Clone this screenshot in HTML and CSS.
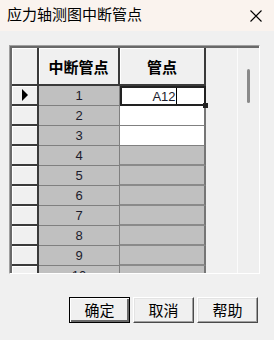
FILE: index.html
```html
<!DOCTYPE html>
<html lang="zh">
<head>
    <meta charset="UTF-8">
    <title>应力轴测图中断管点</title>
    <link rel="stylesheet" href="styles.css">
</head>
<body>
    <div class="titlebar">
        <span class="title">应力轴测图中断管点</span>
        <svg class="close" width="12" height="12" viewBox="0 0 12 12">
            <path d="M0.5 0.5 L11.5 11.5 M11.5 0.5 L0.5 11.5" stroke="#000" stroke-width="1.1" fill="none"/>
        </svg>
    </div>

    <div class="content">
        <!-- Griglia dati -->
        <div class="grid-frame">
            <div class="grid-inner">
                <div class="cells">
                    <div class="row head">
                        <div class="rh"></div>
                        <div class="ch c1">中断管点</div>
                        <div class="ch c2">管点</div>
                    </div>
                    <div class="row">
                        <div class="rh"><span class="arrow"></span></div>
                        <div class="cell c1">1</div>
                        <div class="cell c2 white current"><span>A12</span><span class="caret"></span><span class="handle"></span></div>
                    </div>
                    <div class="row">
                        <div class="rh"></div>
                        <div class="cell c1">2</div>
                        <div class="cell c2 white"></div>
                    </div>
                    <div class="row">
                        <div class="rh"></div>
                        <div class="cell c1">3</div>
                        <div class="cell c2 white"></div>
                    </div>
                    <div class="row">
                        <div class="rh"></div>
                        <div class="cell c1">4</div>
                        <div class="cell c2"></div>
                    </div>
                    <div class="row">
                        <div class="rh"></div>
                        <div class="cell c1">5</div>
                        <div class="cell c2"></div>
                    </div>
                    <div class="row">
                        <div class="rh"></div>
                        <div class="cell c1">6</div>
                        <div class="cell c2"></div>
                    </div>
                    <div class="row">
                        <div class="rh"></div>
                        <div class="cell c1">7</div>
                        <div class="cell c2"></div>
                    </div>
                    <div class="row">
                        <div class="rh"></div>
                        <div class="cell c1">8</div>
                        <div class="cell c2"></div>
                    </div>
                    <div class="row">
                        <div class="rh"></div>
                        <div class="cell c1">9</div>
                        <div class="cell c2"></div>
                    </div>
                    <div class="row">
                        <div class="rh"></div>
                        <div class="cell c1">10</div>
                        <div class="cell c2"></div>
                    </div>
                </div>
                <div class="blank"></div>
                <div class="vscroll"><div class="thumb"></div></div>
            </div>
        </div>

        <div class="buttons">
            <button class="btn default">确定</button>
            <button class="btn">取消</button>
            <button class="btn">帮助</button>
        </div>
    </div>
</body>
</html>
```

FILE: styles.css
```css
* {
    margin: 0;
    padding: 0;
    box-sizing: border-box;
}
body {
    width: 274px;
    height: 340px;
    overflow: hidden;
    background-color: #f0f0f0;
    font-family: "Noto Sans CJK SC", "Liberation Sans", sans-serif;
    color: #000;
}
/* Barra del titolo */
.titlebar {
    height: 31px;
    background-color: #faf3ee;
    display: flex;
    align-items: center;
    justify-content: space-between;
    padding: 0 12px 0 7px;
}
.title {
    font-size: 15px;
    line-height: 20px;
    margin-top: -4px;
}
.close {
    display: block;
}
.content {
    padding: 14px 0 0 9px;
}
/* Griglia */
.grid-frame {
    width: 251px;
    height: 229px;
    border-top: 1px solid #a0a0a0;
    border-left: 1px solid #a0a0a0;
    border-right: 1px solid #ffffff;
    border-bottom: 1px solid #ffffff;
}
.grid-inner {
    height: 100%;
    border-top: 2px solid #696969;
    border-left: 2px solid #696969;
    display: flex;
    overflow: hidden;
}
.cells {
    width: 194px;
    flex: none;
}
.row {
    display: flex;
    height: 20px;
}
.row.head {
    height: 38px;
}
.rh {
    width: 27px;
    background-color: #f0f0f0;
    border-right: 2px solid #3a3a3a;
    border-bottom: 2px solid #3a3a3a;
    box-shadow: inset 1px 1px #ffffff;
    display: flex;
    align-items: center;
    justify-content: center;
}
.arrow {
    width: 0;
    height: 0;
    border-top: 6px solid transparent;
    border-bottom: 6px solid transparent;
    border-left: 6px solid #000;
    margin-left: 1px;
}
.ch {
    background-color: #f0f0f0;
    border-right: 2px solid #3a3a3a;
    border-bottom: 2px solid #3a3a3a;
    box-shadow: inset 1px 1px #ffffff;
    font-size: 15px;
    font-weight: bold;
    display: flex;
    align-items: center;
    justify-content: center;
}
.c1 {
    width: 81px;
}
.c2 {
    width: 86px;
}
.cell {
    background-color: #c0c0c0;
    border-right: 1px solid #808080;
    border-bottom: 1px solid #808080;
    font-family: "Liberation Sans", sans-serif;
    font-size: 13px;
    color: #1c1c2c;
    display: flex;
    align-items: center;
    justify-content: center;
}
.cell.c2 {
    border-right: 2px solid #767676;
    border-bottom: 2px solid #8a8a8a;
}
.cell.white {
    background-color: #ffffff;
    border-bottom: 1px solid #808080;
}
.cell.current {
    position: relative;
    border: 2px solid #222;
    padding-left: 3px;
}
.caret {
    width: 1px;
    height: 16px;
    background-color: #000;
}
.handle {
    position: absolute;
    right: -4px;
    bottom: -4px;
    width: 5px;
    height: 5px;
    background-color: #222;
}
.blank {
    width: 31px;
    flex: none;
    background-color: #f0f0f0;
}
.vscroll {
    width: 22px;
    flex: none;
    border-left: 1px solid #fbfbfb;
    background-color: #efefef;
    padding: 21px 0 0 9px;
}
.thumb {
    width: 3px;
    height: 34px;
    border-radius: 2px;
    background-color: #8a8a8a;
}
/* Pulsanti */
.buttons {
    display: flex;
    justify-content: flex-end;
    gap: 3px;
    padding-right: 16px;
    margin-top: 23px;
}
.btn {
    width: 61px;
    height: 26px;
    background-color: #f0f0f0;
    font-family: "Noto Sans CJK SC", sans-serif;
    font-size: 15px;
    color: #000;
    border: 1px solid;
    border-color: #ffffff #4a4a4a #4a4a4a #ffffff;
    box-shadow: inset -1px -1px #a0a0a0, inset 1px 1px #e3e3e3;
    display: flex;
    align-items: center;
    justify-content: center;
    padding-bottom: 1px;
}
.btn.default {
    border: 1px solid #000;
    box-shadow: inset 1px 1px #ffffff, inset -2px -2px #696969;
}
```
